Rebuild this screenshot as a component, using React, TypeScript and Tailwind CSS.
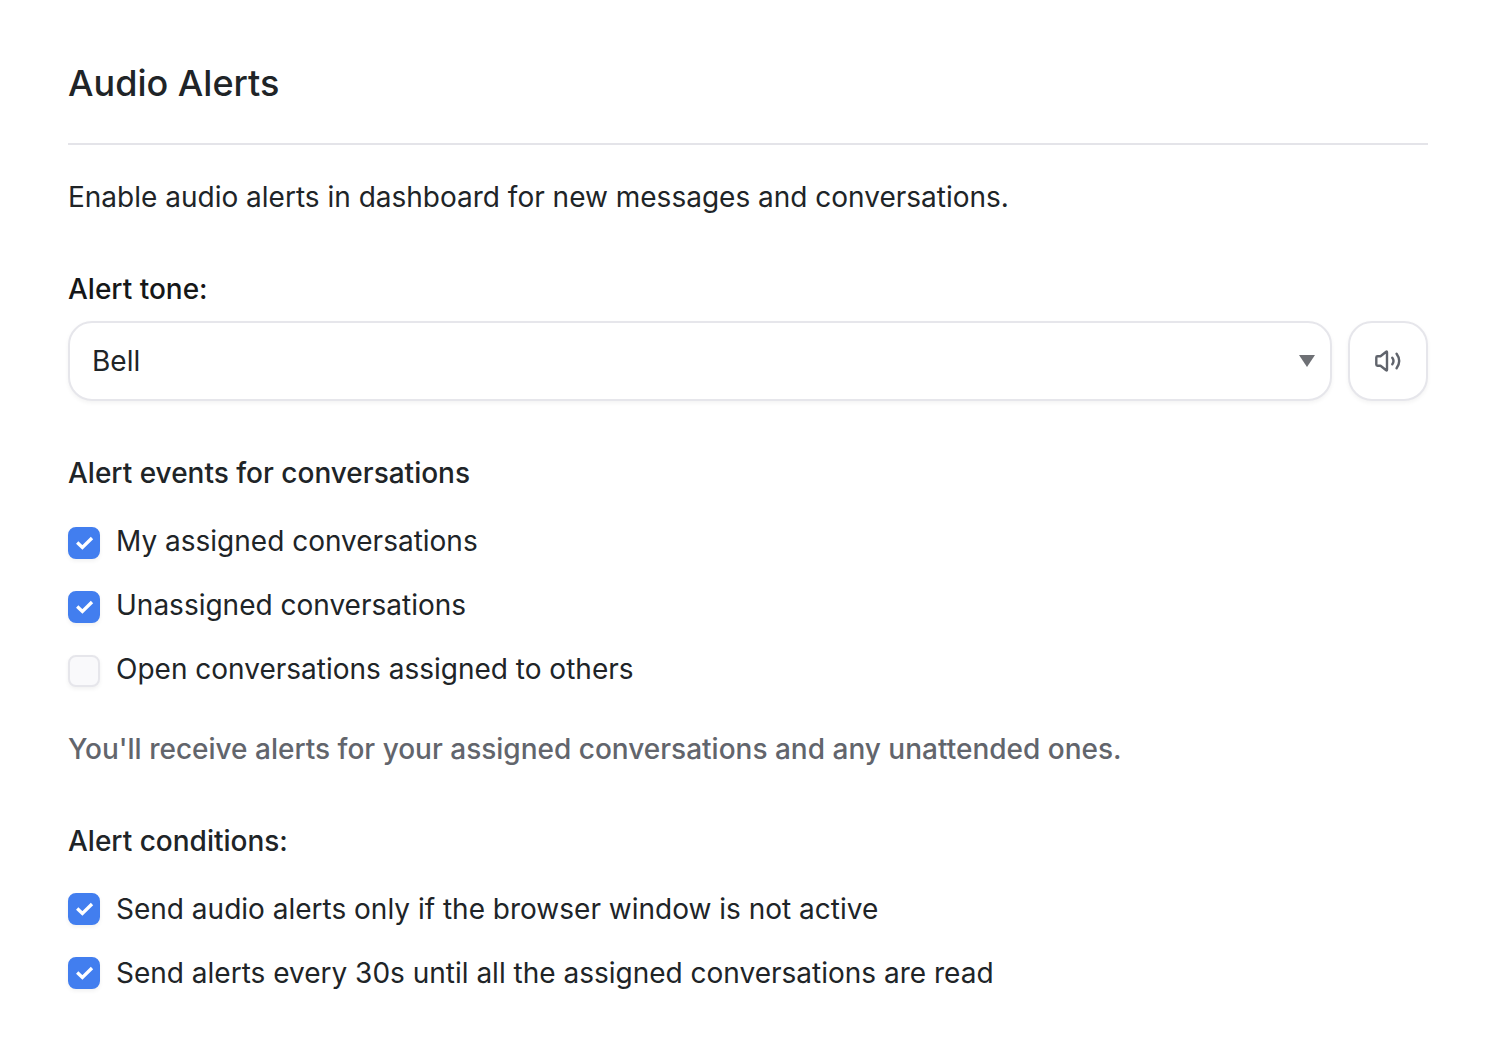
import { useState } from "react";

function CheckRow({ id, label, initial, offset }: { id: string; label: string; initial: boolean; offset?: boolean }) {
  const [checked, setChecked] = useState(initial);
  return (
    <div className={offset ? "flex items-start gap-4" : "flex items-center gap-4"}>
      <span className={offset ? "mt-0.5 grid h-8 w-8 shrink-0" : "grid h-8 w-8 shrink-0"}>
        <input
          id={id}
          type="checkbox"
          checked={checked}
          onChange={(e) => setChecked(e.target.checked)}
          className="peer col-start-1 row-start-1 h-8 w-8 appearance-none rounded-lg border-2 border-[#e6e6eb] bg-[#f9f9fb] shadow-[0_2px_4px_rgba(0,0,0,0.06)] checked:border-[#427eef] checked:bg-[#427eef]"
        />
        <svg
          viewBox="0 0 32 32"
          fill="none"
          className="pointer-events-none col-start-1 row-start-1 hidden h-8 w-8 text-white peer-checked:block"
        >
          <path d="M9.200 15.500l5.200 5L24 11" stroke="currentColor" strokeWidth="3.3" />
        </svg>
      </span>
      <label htmlFor={id} className="text-[28px] leading-8">
        {label}
      </label>
    </div>
  );
}

export default function App() {
  return (
    <main className="min-h-screen bg-white px-[68px] pt-[59px] pb-16 font-['Inter',sans-serif] text-[28px] leading-[42px] text-[#202427]">
      <header className="border-b-2 border-[#e4e4e9] pb-9">
        <h1 className="text-4xl leading-[48px] font-medium">Audio Alerts</h1>
      </header>
      <p className="mt-[31px]">Enable audio alerts in dashboard for new messages and conversations.</p>

      <section className="mt-[50px]">
        <label htmlFor="tone" className="block font-medium text-[#151718]">
          Alert tone:
        </label>
        <div className="mt-[11px] flex gap-4">
          <div className="grid flex-1 items-center">
            <select
              id="tone"
              defaultValue="Bell"
              className="col-start-1 row-start-1 h-20 w-full appearance-none rounded-3xl border-2 border-[#e6e6eb] bg-white px-[22px] shadow-[0_2px_4px_rgba(0,0,0,0.05)]"
            >
              <option>Bell</option>
              <option>Chime</option>
              <option>Ding</option>
            </select>
            <svg viewBox="0 0 16 12" className="pointer-events-none col-start-1 row-start-1 mr-[17px] h-3 w-4 justify-self-end">
              <path d="M0 0h16L8 12z" fill="#6e7075" />
            </svg>
          </div>
          <button
            type="button"
            aria-label="Play alert tone"
            className="flex h-20 w-20 items-center justify-center rounded-3xl border-2 border-[#e6e6eb] bg-white text-[#60646c] shadow-[0_2px_4px_rgba(0,0,0,0.05)]"
          >
            <svg viewBox="0 0 28 28" fill="none" stroke="currentColor" strokeWidth="2.4" strokeLinejoin="round" className="h-7 w-7">
              <path d="M3.500 9.300H6.500L12.200 4.800Q13 4.200 13 5.200V22.800Q13 23.800 12.200 23.200L6.500 18.700H3.500Q2.300 18.700 2.300 17.500V10.500Q2.300 9.300 3.500 9.300z" />
              <path d="M18.300 10.800q2.400 3.200 0 6.400M22.600 6.800q5.200 7.200 0 14.400" strokeLinecap="round" />
            </svg>
          </button>
        </div>
      </section>

      <section className="mt-[51px]">
        <h2 className="font-medium">Alert events for conversations</h2>
        <div className="mt-[31px] flex flex-col gap-[30px]">
          <CheckRow id="mine" label="My assigned conversations" initial offset />
          <CheckRow id="unassigned" label="Unassigned conversations" initial offset />
          <CheckRow id="others" label="Open conversations assigned to others" initial={false} offset />
        </div>
        <p className="mt-[41px] font-medium text-[#62656c]">
          You'll receive alerts for your assigned conversations and any unattended ones.
        </p>
      </section>

      <section className="mt-[50px]">
        <h2 className="font-medium">Alert conditions:</h2>
        <div className="mt-[31px] flex flex-col gap-8">
          <CheckRow id="inactive" label="Send audio alerts only if the browser window is not active" initial />
          <CheckRow id="repeat" label="Send alerts every 30s until all the assigned conversations are read" initial />
        </div>
      </section>
    </main>
  );
}
